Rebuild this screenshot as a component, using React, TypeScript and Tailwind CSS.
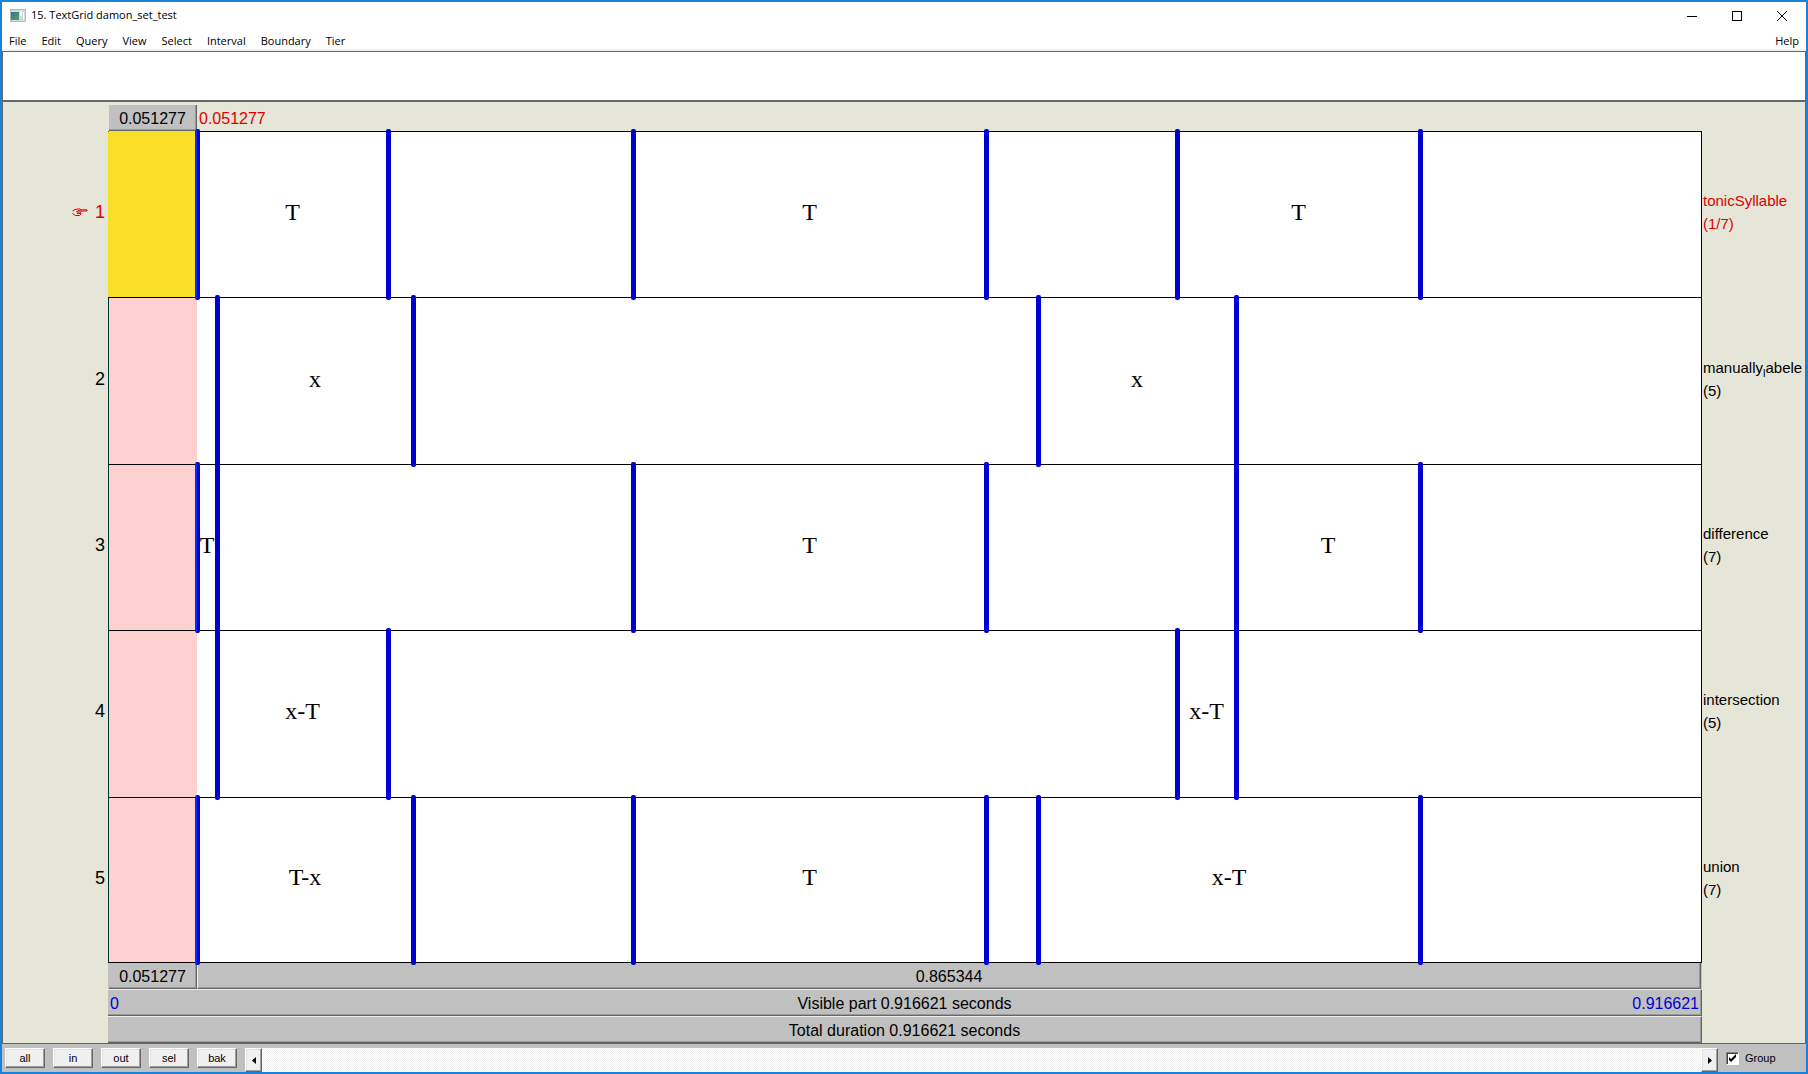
import React from "react";

type Interval = { size: number; label?: string; selected?: boolean };
type Tier = { name: React.ReactNode; count: string; active?: boolean; intervals: Interval[] };

const tiers: Tier[] = [
  {
    name: "tonicSyllable",
    count: "(1/7)",
    active: true,
    intervals: [
      { size: 88, selected: true },
      { size: 191, label: "T" },
      { size: 245 },
      { size: 353, label: "T" },
      { size: 191 },
      { size: 243, label: "T" },
      { size: 281 },
    ],
  },
  {
    name: (
      <>
        manually<sub className="bottom-0 align-[-4px] text-[11px] leading-none">l</sub>abele
      </>
    ),
    count: "(5)",
    intervals: [
      { size: 108 },
      { size: 196, label: "x" },
      { size: 625 },
      { size: 198, label: "x" },
      { size: 465 },
    ],
  },
  {
    name: "difference",
    count: "(7)",
    intervals: [
      { size: 88 },
      { size: 20, label: "T" },
      { size: 416 },
      { size: 353, label: "T" },
      { size: 250 },
      { size: 184, label: "T" },
      { size: 281 },
    ],
  },
  {
    name: "intersection",
    count: "(5)",
    intervals: [
      { size: 108 },
      { size: 171, label: "x-T" },
      { size: 789 },
      { size: 59, label: "x-T" },
      { size: 465 },
    ],
  },
  {
    name: "union",
    count: "(7)",
    intervals: [
      { size: 88 },
      { size: 216, label: "T-x" },
      { size: 220 },
      { size: 353, label: "T" },
      { size: 52 },
      { size: 382, label: "x-T" },
      { size: 281 },
    ],
  },
];

const SELECTION = 88;
const TOTAL = 1592;
const selectionWidth = `${(SELECTION / TOTAL) * 100}%`;

function AppIcon() {
  return (
    <svg width="16" height="14" viewBox="0 0 16 14" aria-hidden="true">
      <defs>
        <linearGradient id="pane" x1="0" y1="0" x2="1" y2="1">
          <stop offset="0" stopColor="#3d6f93" />
          <stop offset="1" stopColor="#56a06c" />
        </linearGradient>
      </defs>
      <rect x="0.5" y="0.5" width="15" height="12" fill="#d3dadd" stroke="#b4babd" />
      <rect x="1" y="3" width="8" height="8" fill="url(#pane)" />
      <rect x="10" y="2" width="2" height="5" fill="#ffffff" />
      <rect x="13" y="3" width="1" height="8" fill="#ffffff" />
    </svg>
  );
}

function TitleBar() {
  return (
    <header className="flex h-[27px] items-center pr-px pl-2 text-black">
      <AppIcon />
      <h1 className="ml-[5px] flex-1 text-[11px]">15. TextGrid damon_set_test</h1>
      <button aria-label="Minimize" className="flex h-full w-[45px] items-center justify-center">
        <svg width="10" height="10" viewBox="0 0 10 10" shapeRendering="crispEdges">
          <path d="M0 5.5H10" stroke="#000" />
        </svg>
      </button>
      <button aria-label="Maximize" className="flex h-full w-[45px] items-center justify-center">
        <svg width="10" height="10" viewBox="0 0 10 10" shapeRendering="crispEdges">
          <rect x="0.5" y="0.5" width="9" height="9" fill="none" stroke="#000" />
        </svg>
      </button>
      <button aria-label="Close" className="flex h-full w-[46px] items-center justify-center">
        <svg width="10" height="10" viewBox="0 0 10 10">
          <path d="M0 0L10 10M10 0L0 10" stroke="#000" />
        </svg>
      </button>
    </header>
  );
}

function MenuBar() {
  const items = ["File", "Edit", "Query", "View", "Select", "Interval", "Boundary", "Tier"];
  return (
    <nav className="flex h-[22px] items-center border-b-2 border-[#f0f0f0] px-[7px] pt-[4px] text-[11px]">
      <div className="flex flex-1 gap-[15px]">
        {items.map((item) => (
          <button key={item}>{item}</button>
        ))}
      </div>
      <button>Help</button>
    </nav>
  );
}

function TierRow({ tier, index }: { tier: Tier; index: number }) {
  const first = index === 0;
  const last = index === tiers.length - 1;
  return (
    <div className="flex flex-1">
      <div
        className={
          "flex w-[105px] items-center justify-end gap-[7px] pr-[3px] pb-1 text-[18px] leading-6 " +
          (tier.active ? "text-[#dd0000]" : "text-black")
        }
      >
        {tier.active && <PointingHand />}
        {index + 1}
      </div>
      <div
        className={
          "flex min-w-0 flex-1 border-t border-r border-l border-black bg-white " +
          (first ? "border-l-[#fadf28] " : "border-l-[#003333] ") +
          (last ? "border-b" : "")
        }
      >
        <div className="relative flex min-w-0 flex-1">
          {!first && (
            <div
              className="absolute inset-y-0 left-0 bg-[#ffd0d0]"
              style={{ width: selectionWidth }}
            />
          )}
          {tier.intervals.map((interval, i) => (
            <div
              key={i}
              className={
                "relative flex min-w-0 basis-0 items-center justify-center pb-[5px] font-['Liberation_Serif',serif] text-[24px] leading-7 whitespace-nowrap text-black " +
                (interval.selected ? "-mt-px bg-[#fadf28]" : "")
              }
              style={{ flexGrow: interval.size }}
            >
              {i > 0 && (
                <span
                  className={
                    "absolute -top-[3px] -bottom-[3px] -left-[2px] z-10 w-[5px] rounded-[2px] bg-[#0000d2] " +
                    (i === 1 && tier.intervals[0].size === SELECTION
                      ? "border-l-2 border-[#002cff]"
                      : "")
                  }
                />
              )}
              {interval.label}
            </div>
          ))}
        </div>
      </div>
      <div
        className={
          "flex w-[103px] flex-col justify-center pb-1 pl-px text-[15px] leading-[23px] whitespace-nowrap " +
          (tier.active ? "text-[#dd0000]" : "text-black")
        }
      >
        <span>{tier.name}</span>
        <span>{tier.count}</span>
      </div>
    </div>
  );
}

function PointingHand() {
  return (
    <svg width="16" height="9" viewBox="0 0 16 9" fill="none" stroke="#dd0000" aria-hidden="true">
      <path d="M0.5 3L3 1.5L7 0.8L9.5 1.8H15V3H9.5M0.5 5.5L3.5 7.5H7.5L9 6L8.5 4.5L9.5 3L6 2.5L4.5 4H8M5 5.5H8.5" />
    </svg>
  );
}

const bar =
  "flex h-[27px] items-center border-t border-r border-b border-t-[#ececec] border-r-[#666] border-b-[#666] bg-[#c0c0c0] pt-[2px] shadow-[inset_-1px_-1px_0_#999]";

const pushButton =
  "border border-t-white border-l-white border-r-[#666] border-b-[#666] bg-[#f0f0f0] shadow-[inset_-1px_-1px_0_#a0a0a0,inset_1px_1px_0_#e3e3e3]";

function TimeBars() {
  return (
    <div className="mr-[103px] ml-[105px] text-[16px] leading-5 text-black">
      <div className="flex bg-[#c0c0c0] px-px">
        <button
          className="flex h-[26px] items-center justify-center border-r border-b border-[#666] pt-[2px] shadow-[inset_-1px_-1px_0_#999]"
          style={{ width: selectionWidth }}
        >
          0.051277
        </button>
        <button className="flex h-[26px] flex-1 items-center justify-center border-r border-b border-l border-[#666] border-l-[#ececec] pt-[2px] shadow-[inset_-1px_-1px_0_#999]">
          0.865344
        </button>
      </div>
      <button className={bar + " w-full pr-[2px] pl-[2px]"}>
        <span className="flex-1 text-left text-[#0000d2]">0</span>
        <span>Visible part 0.916621 seconds</span>
        <span className="flex-1 text-right text-[#0000d2]">0.916621</span>
      </button>
      <button className={bar + " w-full justify-center"}>Total duration 0.916621 seconds</button>
    </div>
  );
}

function BottomBar() {
  return (
    <footer className="flex h-[28px] items-start bg-[#c0c0c0] pt-1 pl-[3px] text-[11px] text-black">
      <div className="flex gap-2 font-['Liberation_Sans',sans-serif]">
        {["all", "in", "out", "sel", "bak"].map((label) => (
          <button key={label} className={pushButton + " h-5 w-10 leading-4"}>
            {label}
          </button>
        ))}
      </div>
      <div className="ml-2 flex h-6 flex-1 bg-[repeating-conic-gradient(#f0f0f0_0_25%,#ffffff_0_50%)] bg-[length:2px_2px]">
        <button
          aria-label="Scroll left"
          className={pushButton + " flex w-[17px] items-center justify-center"}
        >
          <svg width="4" height="7" viewBox="0 0 4 7">
            <path d="M4 0V7L0 3.5Z" fill="#000" />
          </svg>
        </button>
        <span className="flex-1" />
        <button
          aria-label="Scroll right"
          className={pushButton + " flex w-[17px] items-center justify-center"}
        >
          <svg width="4" height="7" viewBox="0 0 4 7">
            <path d="M0 0V7L4 3.5Z" fill="#000" />
          </svg>
        </button>
      </div>
      <label className="flex h-5 w-[88px] items-center gap-[6px] pl-2 font-['Liberation_Sans',sans-serif]">
        <span className="relative flex">
          <input
            type="checkbox"
            defaultChecked
            className="peer size-[13px] appearance-none border border-t-[#808080] border-r-white border-b-white border-l-[#808080] bg-white shadow-[inset_1px_1px_0_#404040]"
          />
          <svg
            className="pointer-events-none absolute inset-0 hidden peer-checked:block"
            width="13"
            height="13"
            viewBox="0 0 13 13"
          >
            <path d="M3 5V8L5 10L10 5V2L5 7Z" fill="#000" />
          </svg>
        </span>
        Group
      </label>
    </footer>
  );
}

export default function App() {
  return (
    <div className="flex h-screen min-h-[480px] flex-col border-2 border-[#1a82d8] bg-white font-['Open_Sans',sans-serif]">
      <TitleBar />
      <MenuBar />
      <div className="flex flex-1 flex-col border border-[#666] bg-[#e5e6d8] font-['Liberation_Sans',sans-serif]">
        <div className="h-[50px] border-b-2 border-[#666] bg-white" />
        <div className="mr-[103px] ml-[105px] flex h-[29px] px-px pt-[3px] text-[16px] leading-5">
          <button
            className="flex h-[26px] items-center justify-center border-r border-b border-[#666] bg-[#c0c0c0] pt-[2px] text-black shadow-[inset_-1px_-1px_0_#999]"
            style={{ width: selectionWidth }}
          >
            0.051277
          </button>
          <div className="flex flex-1 items-center pt-px pl-[2px] text-[#dd0000]">0.051277</div>
        </div>
        <div className="flex flex-1 flex-col">
          {tiers.map((tier, index) => (
            <TierRow key={index} tier={tier} index={index} />
          ))}
        </div>
        <TimeBars />
      </div>
      <BottomBar />
    </div>
  );
}
